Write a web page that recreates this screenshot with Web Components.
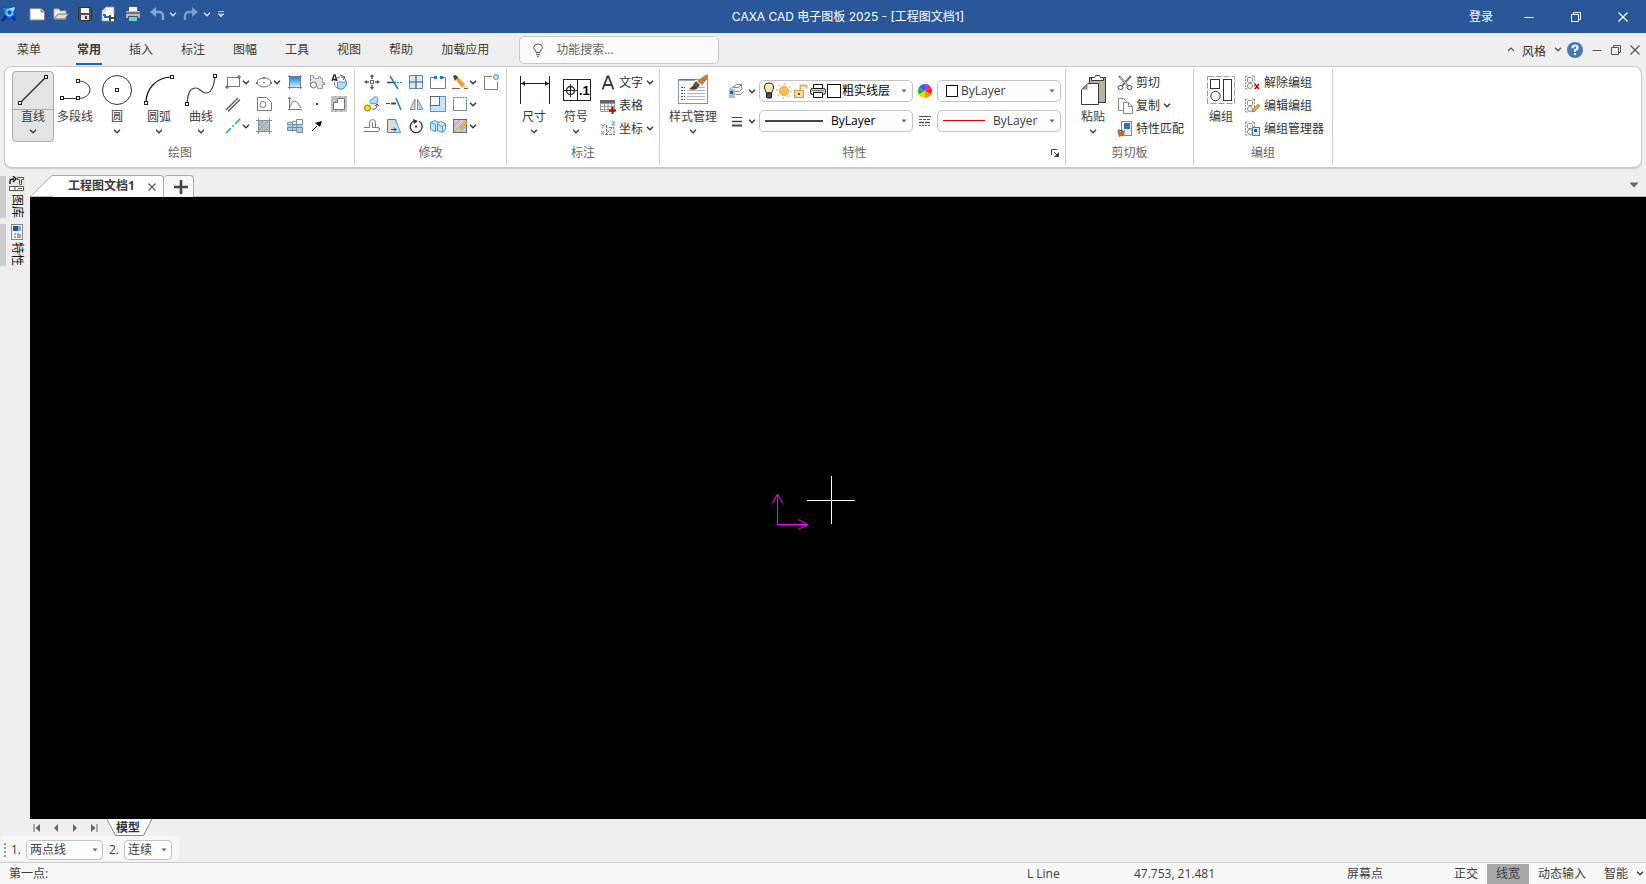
<!DOCTYPE html>
<html lang="zh-CN">
<head>
<meta charset="utf-8">
<title>CAXA CAD 电子图板 2025</title>
<style>
html,body{height:100%;margin:0}
body{font:12px/16px "Open Sans","Noto Sans CJK SC",sans-serif;color:#3c3c3c;background:#efefef;overflow:hidden}
</style>
</head>
<body>
<cad-app></cad-app>
<script>
const BASE = `*{box-sizing:border-box}
button{font:inherit;color:inherit;background:none;border:0;padding:0;margin:0;white-space:nowrap;cursor:default}
select,input{font:inherit;color:inherit;background:none;border:0;padding:0;margin:0;min-width:0;outline:0;appearance:none}`;

function define(name, css, html) {
  customElements.define(name, class extends HTMLElement {
    constructor() {
      super();
      const t = document.createElement('template');
      const body = typeof html === 'function' ? html(this) : html;
      t.innerHTML = `<style>${BASE}${css}</style>${body}`;
      this.attachShadow({ mode: 'open' }).append(t.content.cloneNode(true));
    }
  });
}

/* name: [width, height, markup] */
const sq = (x, y) => `<rect x="${x - 1.5}" y="${y - 1.5}" width="3" height="3" fill="#fff" stroke="#222"/>`;
const G = 'fill="none" stroke="#77797d"';
const B = 'stroke="#1e7fd0"';
const grp = `<g fill="#fff" stroke="#8a8c90"><path d="M.5 1v13M.5 1h3M.5 14h3M9.500 1v13M7 1h2.500" stroke-dasharray="2 1"/><rect x="2.500" y="2.500" width="5" height="5" rx="1"/><circle cx="5" cy="11" r="2.500"/></g>`;
const ICONS = {
  chev: [8, 5, '<path d="M1 .8l3 3 3-3" fill="none" stroke="currentColor" stroke-width="1.300"/>'],
  up: [8, 5, '<path d="M1 4l3-3 3 3" fill="none" stroke="currentColor" stroke-width="1.200"/>'],
  tri: [6, 4, '<path d="M.5 .5h5l-2.500 3z" fill="#666"/>'],
  tribig: [10, 6, '<path d="M.5 .5h9L5 5.500z" fill="#666"/>'],
  logo: [16, 16, '<path d="M1 1l6 1 8-1-1 5 1 5-3 1 3 3-5-2-8 3 1-6z" fill="#0b4fc4"/><path d="M2 2l5 0 7 0-2 3 1 4-5 3-4-3z" fill="#1687f0"/><circle cx="8.500" cy="6.500" r="3" fill="#0a55c8" stroke="#8fd0ff" stroke-width="1.500"/><path d="M1 15l4-5M12 11l2 3" stroke="#06246e" stroke-width="2"/><path d="M8 2.500l6-1.500-1 4" fill="#a8e2ff"/>'],
  new: [16, 16, '<path d="M1 2.500h11l3.500 3.500v8H1z" fill="#fff" stroke="#888"/><path d="M12 2.500V6h3.500" fill="#ccc" stroke="#777"/>'],
  open: [16, 16, '<path d="M1 3h5l1 2h6v8H1z" fill="#f4f0ea" stroke="#aaa"/><path d="M1 13l4-5h10.500l-4 5z" fill="#dedbd6" stroke="#777"/>'],
  save: [16, 16, '<rect x="1.500" y="1.500" width="13" height="13" rx="1" fill="#4c5054" stroke="#333"/><rect x="4" y="2" width="8" height="5" fill="#fff"/><rect x="4" y="9" width="8" height="5" fill="#ddd"/><rect x="8" y="10" width="2" height="3" fill="#345"/>'],
  saveas: [16, 16, '<path d="M5 1h8v14H1V5z" fill="#fff" stroke="#999"/><path d="M1 5h4V1z" fill="#ccc"/><path d="M2 9h2v2h4" stroke="#1674cb" stroke-width="2" fill="none"/><rect x="8" y="9" width="7" height="6" fill="#444"/><path d="M10 9h3v2h-3zM10 13h3v2h-3z" fill="#fff"/>'],
  print: [16, 16, '<rect x="4" y="1" width="8" height="6" fill="#fff"/><rect x="1" y="5" width="14" height="7" rx="1" fill="#b9bab9"/><path d="M1 7h14" stroke="#777" stroke-width="2"/><rect x="3" y="10" width="10" height="4" fill="#50565a"/><rect x="4" y="11" width="8" height="4" fill="#55d4ee"/>'],
  undo: [16, 16, '<path d="M7 1v10L1 6z" fill="#8aa6d0"/><path d="M6 6h4q4 0 4 4v4" fill="none" stroke="#8aa6d0" stroke-width="2.400"/>'],
  redo: [16, 16, '<path d="M9 1v10l6-5z" fill="#7d9cca"/><path d="M10 6H6q-4 0-4 4v4" fill="none" stroke="#7d9cca" stroke-width="2.400"/>'],
  more: [8, 8, '<path d="M1 1.500h6M1 4h6L4 7z" fill="#bbb" stroke="#c8c4bc"/>'],
  wmin: [10, 10, '<path d="M.5 5.500h9" stroke="currentColor"/>'],
  wres: [10, 10, '<path d="M.5 2.500h7v7h-7zM2.500 2.500V.5h7v7h-2" fill="none" stroke="currentColor"/>'],
  wclose: [10, 10, '<path d="M.5.5l9 9M9.500.5l-9 9" stroke="currentColor" stroke-width="1.200"/>'],
  help: [16, 16, '<circle cx="8" cy="8" r="8" fill="#437bb4"/><path d="M5.500 6.200Q5.500 3.500 8 3.500t2.500 2.300Q10.500 7.500 8 8.200v1.500" fill="none" stroke="#fff" stroke-width="2"/><rect x="7" y="11" width="2" height="2" fill="#fff"/>'],
  bulb: [12, 14, '<path d="M4 9.500Q4 8 3 7T1.500 4.500Q2 1 6 1t4.500 3.500Q10 6 9 7T8 9.500zM4 11.500h4M5 13.300h2" fill="none" stroke="#555"/>'],

  line: [42, 38, `<path d="M8 32L34 6" stroke="#333" stroke-width="1.500"/>${sq(8, 32)}${sq(34, 6)}`],
  pline: [42, 38, `<path d="M24 10C40 10 40 27.500 24 27.500H8" fill="none" stroke="#333"/>${sq(8, 27)}${sq(24, 27)}${sq(24, 10)}`],
  circle: [42, 38, `<circle cx="21" cy="19" r="14.500" fill="none" stroke="#333"/>${sq(21, 19)}`],
  arc: [42, 38, `<path d="M8 32C8 18 18 6 34 6" fill="none" stroke="#111" stroke-width="1.200"/>${sq(8, 32)}${sq(34, 6)}`],
  spline: [42, 38, `<path d="M7 33C8 20 11 17 16 17C20 17 21 22 26 22C32 22 34 15 35 5" fill="none" stroke="#444" stroke-width="1.200"/>${sq(7, 33)}${sq(35, 5)}`],
  dim: [42, 38, '<path d="M7.500 5v28M36.500 5v28M8 12.500h28" stroke="#222"/><path d="M8 12.500l4-2.500v5zM36 12.500l-4-2.500v5z" fill="#222"/>'],
  sym: [42, 38, '<rect x="8.500" y="8.500" width="27" height="21" fill="#fff" stroke="#222"/><path d="M22.500 8v22M9 19.500h13M15.500 13v13" stroke="#222"/><circle cx="15.500" cy="19.500" r="4" fill="none" stroke="#222" stroke-width="1.300"/><text x="24" y="24" font-family="Liberation Sans" font-weight="700" font-size="13" fill="#000">.1</text>'],
  style: [54, 38, '<rect x="12.500" y="8.500" width="29" height="24" fill="#fff" stroke="#8297ab"/><path d="M13 9h16" stroke="#39566f"/><path d="M15 16.500h4M15 19.500h4M15 22.500h4M15 25.500h4M15 28.500h4" stroke="#39566f" stroke-dasharray="2 1"/><path d="M21 19.500h18M21 22.500h18M21 25.500h18M21 28.500h18M33 16.500h6" stroke="#a9b3cb"/><path d="M31 10l7-5 4-2v4l-6 7z" fill="#c47a35"/><path d="M30 10l4 4-2 3-5-3z" fill="#555"/><path d="M23 18l5-4 4 3q-3 3-9 1z" fill="#6a3514"/>'],
  paste: [42, 38, '<rect x="17.500" y="6.500" width="16" height="25" fill="#beb09e" stroke="#333c48"/><path d="M19.500 9.500v-3h3l1-2h4l1 2h3v3z" fill="#fff" stroke="#333c48"/><path d="M15.500 12.500h11v21h-17v-15z" fill="#fff" stroke="#333c48"/><path d="M15.500 12.500v6h-6z" fill="#8c8c8c"/>'],
  group: [42, 38, '<rect x="7.500" y="5.500" width="27" height="27" fill="none" stroke="#999" stroke-dasharray="6 2"/><g fill="#fff" stroke="#333"><rect x="10.500" y="8.500" width="9" height="9"/><rect x="23.500" y="8.500" width="8" height="21"/><circle cx="15.500" cy="25" r="4.700"/></g>'],

  rect: [16, 16, `<rect x="2.500" y="3.500" width="12" height="9" ${G}/><path d="M1 12h2v2H1zM13 2h2v2h-2z" fill="#fff" stroke="#555"/>`],
  ellipse: [16, 16, `<ellipse cx="8" cy="8.500" rx="7" ry="4.500" ${G}/><path d="M7 3h2v2H7zM7 8h2v1H7zM0 8h2v2H0zM14 8h2v2h-2z" fill="#777"/>`],
  grad: [16, 16, '<defs><linearGradient id="g" x2="0" y2="1"><stop stop-color="#0c83e8"/><stop offset="1" stop-color="#d9eeff"/></linearGradient></defs><rect x="2.500" y="2.500" width="11" height="11" fill="url(#g)"/><path d="M2.500 1v14M13.500 1v14M1 2.500h14M1 13.500h14" stroke="#667" stroke-width=".8"/>'],
  gear: [16, 16, '<path d="M1.500 1.500h3v2l2 1h3v-2h2v2h2v4h2v2h-2v4h-5v-2" fill="#dfe3ea" stroke="#8f99a8"/><path d="M1.500 1v8M.5 6h3" fill="none" stroke="#8f99a8"/><circle cx="4.500" cy="11" r="3" fill="#fff" stroke="#666"/>'],
  rotA: [16, 16, '<circle cx="9.500" cy="9" r="6" fill="none" stroke="#555" stroke-dasharray="3 1"/><path d="M6.500 8h9q0 7-6 7-3 0-3-2z" fill="#b3dcf7" stroke="#4c9ad4"/><path d="M9 1l5 2-2 3" fill="none" stroke="#555"/><path d="M1 7l2-6h1l2 6M2 5.500h3" fill="none" stroke="#222" stroke-width="1.300"/>'],
  para: [16, 16, '<path d="M1 14L13 2M3 15.500L15 3.500" stroke="#555" stroke-width="1.300"/>'],
  poly: [16, 16, `<path d="M1.500 1.500h9l5 5v8h-14z" ${G}/><circle cx="7" cy="8.500" r="3" ${G}/>`],
  curve: [16, 16, `<path d="M2.500 1v13.500M1 13.500h14M2.500 12Q7-2 14 12M1 3l1.500-2L4 3" ${G}/>`],
  dot: [16, 16, '<rect x="7" y="7" width="2" height="2" fill="#444"/>'],
  region: [16, 16, '<rect width="16" height="16" fill="#c6c6c6"/><path d="M0 5l5-5M0 10L10 0M0 15L15 0M4 16L16 4M9 16l7-7" stroke="#a4a4a4"/><path d="M6.500 2.500h7v11h-11v-7h4z" fill="#fff" stroke="#777"/>'],
  cline: [16, 16, '<path d="M1 15L15 1" stroke="#1aa3e0" stroke-width="1.600" stroke-dasharray="7 2 2 2"/>'],
  hatch: [16, 16, '<rect x="3" y="3" width="10" height="10" fill="#b4bdc8"/><path d="M3 7l4-4M3 12l9-9M8 13l5-5" stroke="#98a1ab"/><path d="M2.500 0v16M13.500 0v16M0 2.500h16M0 13.500h16" stroke="#858d96"/>'],
  shaft: [16, 16, '<path d="M.5 4.500h5v-1h4v-2h6v5H.500z" fill="#fff" stroke="#778899"/><path d="M.5 9.500h15v5H10v-2H.500z" fill="#b3cde0" stroke="#778899"/><path d="M5.500 4v8M9.500 2v12M0 8h16" stroke="#6f96bb"/>'],
  arrow: [16, 16, '<path d="M3 13l5-5" stroke="#111"/><path d="M13 3L11 9 6 5z" fill="#000"/>'],

  move: [16, 16, '<path d="M8 2v3M8 11v3M2 8h3M11 8h3" stroke="#555" stroke-width="1.500"/><path d="M8 0l2 3H6zM8 16l2-3H6zM0 8l3-2v4zM16 8l-3-2v4z" fill="#555"/><rect x="6.500" y="6.500" width="3" height="3" fill="#fff" stroke="#666"/>'],
  trim: [16, 16, `<path d="M1 8.500h7" stroke="#444" stroke-width="1.500"/><path d="M8 8.500h8" stroke-dasharray="2 1" ${B}/><path d="M4 2l8 13" ${B} stroke-width="1.500"/>`],
  array: [16, 16, '<rect x="1.500" y="1.500" width="13" height="13" fill="#cfe9fb" stroke="#5b8db5"/><path d="M8 1v14M1 8h14" stroke="#557" stroke-width="1.200"/><path d="M9 9h5v5H9z" fill="#eee"/>'],
  brk: [16, 16, `<path d="M5 3.500H.500v11h15v-11H11" ${G}/><path d="M4 2h3v3H4zM10 2h3v3h-3z" fill="#1e7fd0"/>`],
  erase: [16, 16, '<path d="M1 2l3-1 9 9-3 4z" fill="#f0a030"/><path d="M1 2l2-1 3 2-3 4z" fill="#444"/><path d="M10 14l3-4 2 4z" fill="#f6d9b0"/><path d="M0 14.500h8M12 14.500h4" stroke="#855"/>'],
  newbox: [16, 16, `<path d="M9 2.500H1.500v13h13V8" ${G}/><circle cx="13" cy="3" r="2.500" fill="#bce0f8" stroke="#4c9ad4"/>`],
  copyrot: [16, 16, '<circle cx="3.500" cy="12" r="3" fill="#ffe600" stroke="#887700"/><path d="M6 7q-1-3 2-4t2-2q4-1 4 3 0 4-4 4z" fill="#b7def7" stroke="#4c9ad4"/><path d="M8 13q5 1 5-4M11 10l2-2 2 2" fill="none" stroke="#a33"/>'],
  extend: [16, 16, `<path d="M0 7.500h4" stroke="#444"/><path d="M5 7.500h5" stroke="#444" stroke-width="2"/><path d="M10 2l5 12" ${B} stroke-width="1.600"/>`],
  mirror: [16, 16, '<path d="M7 3v10.500H2z" fill="#ddd" stroke="#888"/><path d="M9.500 3v10.500H15z" fill="#b7d4e6" stroke="#7798ac"/>'],
  scale: [16, 16, '<rect x=".5" y=".5" width="15" height="15" fill="#c4e5fb" stroke="#4a9bd8"/><rect x=".5" y=".5" width="9" height="9" fill="#fff" stroke="#666"/>'],
  dash: [16, 16, '<rect x="1.500" y="1.500" width="13" height="13" fill="none" stroke="#1e7fd0" stroke-dasharray="2 1"/><path d="M14.500 8v6.500H1.500V8" fill="none" stroke="#888"/>'],
  offset: [16, 16, `<path d="M0 9.500h5.500V5q0-3.500 3-3.500t3 3.500v4.500h2q2 0 2 2t-2 2H0M8.500 4.500v5H15" ${G}/>`],
  stretch: [16, 16, '<path d="M1.500 1.500h8v13h-8z" fill="#ddd" stroke="#777"/><path d="M9.500 1.500l5 13h-6" fill="#c4e5fb" stroke="#4a9bd8"/><path d="M5 11.500h5M8 9.500l2 2-2 2" fill="none" stroke="#333"/>'],
  rotate: [16, 16, '<path d="M6 3a6 6 0 1 0 5 .300" fill="none" stroke="#333" stroke-width="1.300"/><path d="M5 1l5 2-4 3z" fill="#333"/><rect x="7" y="7.500" width="2" height="2" fill="#333"/>'],
  cubes: [16, 16, '<path d="M.5 4.500l4-2 5 2v7l-4 2-5-2zM.5 4.500l5 2v7" fill="#c4e5fb" stroke="#4a9bd8"/><path d="M7.500 5.500l3-2 5 2v6l-3 3-5-2zM7.500 6.500l5 2v6M12.500 8.500l3-3" fill="#cfe7f8" stroke="#4a9bd8"/>'],
  hatched: [16, 16, '<rect x="1.500" y="1.500" width="13" height="13" fill="#ccc" stroke="#666"/><path d="M2 8l6-6M2 14L14 2M8 14l6-6" stroke="#aaa"/><path d="M7 12l1-3 6-6 2 2-6 6z" fill="#e9a53a"/>'],

  text: [16, 16, '<path d="M2.500 14.500L7.500 1.500h1l5 13M4 10h8" fill="none" stroke="#333a45" stroke-width="1.800"/>'],
  table: [16, 16, '<path d="M.5 2.500h14v11H.500zM.5 8.500h14M.5 11.500h14M.5 5.500h14M4.500 3v10M8 3v10M11.500 3v10" fill="none" stroke="#999"/><path d="M0 2h15v3H0z" fill="#666"/><path d="M12.500 9v7M9 12.500h7" stroke="#c00000" stroke-width="2"/>'],
  coord: [16, 16, '<path d="M1 3l2 2 2-2M3 5v2M12 1h3l-3 3h3M1 10l3 4M4 10l-3 4" stroke="#4a9bd8" fill="none"/><path d="M6.500 4v9M5 13.500h10M7 12l6-6M9 6.500h5v6" stroke="#777" fill="none" stroke-dasharray="3 1"/>'],
  layers: [16, 16, '<path d="M5.500 4.500l3-3h5l-3 3zM6.500 8.500h5l3-3M7.500 11.500h5l3-3M13.500 1.500v4" fill="none" stroke="#888"/><path d="M8 2L2 6" stroke="#999"/><rect x="1" y="6" width="6" height="9" fill="#a8bfd4"/><rect x="2" y="8" width="3" height="3" fill="#1c63ad"/>'],
  lwidth: [16, 14, '<path d="M4 3.500h10" stroke="#444"/><path d="M4 7.500h10" stroke="#444" stroke-width="1.500"/><path d="M4 11.500h10" stroke="#444" stroke-width="2"/>'],
  light: [12, 18, '<path d="M3.500 11Q1.500 7 1.500 5q0-4 4.500-4t4.500 4q0 2-2 6z" fill="#ffedb0" stroke="#222"/><rect x="3.500" y="11" width="5" height="5" rx="1" fill="#555" stroke="#111"/>'],
  sun: [16, 16, '<circle cx="8" cy="8" r="7" fill="none" stroke="#f6c470" stroke-width="2" stroke-dasharray="1.500 4"/><circle cx="8" cy="8" r="4.500" fill="#ffbe55" stroke="#eea63b"/>'],
  lock: [16, 16, '<path d="M7.500 7V2.500h6v3" fill="none" stroke="#d9b45c" stroke-width="2"/><rect x="1.500" y="7.500" width="9" height="7" fill="#f6dc98" stroke="#c99f45"/><path d="M6 10v2" stroke="#333" stroke-width="1.500"/>'],
  plot: [16, 16, '<path d="M3.500 6.500v-5h9v5" fill="#fff" stroke="#111"/><rect x=".5" y="5.500" width="15" height="6" rx="2" fill="#d8dade" stroke="#111"/><path d="M3.500 9.500h9v5h-9z" fill="#fff" stroke="#111"/><path d="M2 7.500h12" stroke="#777"/>'],
  swatch: [14, 14, '<rect x=".5" y=".5" width="13" height="13" fill="#fff" stroke="#111"/>'],
  swatchs: [12, 12, '<rect x=".5" y=".5" width="11" height="11" fill="#fff" stroke="#111"/>'],
  wheel: [14, 14, '<path d="M7 7V0a7 7 0 0 1 6 3.500z" fill="#e23"/><path d="M7 7L13 3.500a7 7 0 0 1 0 7z" fill="#ff2020"/><path d="M7 7l6 3.500A7 7 0 0 1 7 14z" fill="#ff9100"/><path d="M7 7v7a7 7 0 0 1-6-3.500z" fill="#e9e000"/><path d="M7 7l-6 3.500a7 7 0 0 1 0-7z" fill="#19ba28"/><path d="M7 7L1 3.500A7 7 0 0 1 7 0z" fill="#3858f0"/><path d="M7 7V0q3 0 4.500 1.500z" fill="#c13ae0"/>'],
  ltype: [14, 14, '<path d="M1 2.500h12" stroke="#555"/><path d="M1 5.500h12" stroke="#555" stroke-dasharray="3 1"/><path d="M1 8.500h12" stroke="#555" stroke-width="1.500" stroke-dasharray="5 1"/><path d="M1 11.500h12" stroke="#555" stroke-dasharray="2 1"/>'],
  launch: [8, 8, '<path d="M.5 6V.5H6" fill="none" stroke="#444"/><path d="M3 3l3 3" stroke="#444"/><path d="M8 3v5H3z" fill="#444"/>'],
  cut: [16, 16, '<path d="M2 1l10 11M14 1L4 12" stroke="#777" stroke-width="2"/><path d="M3 2l9 10" stroke="#eee" stroke-width=".8"/><ellipse cx="3.500" cy="12.500" rx="2.500" ry="2" fill="#fff" stroke="#444"/><ellipse cx="12.500" cy="12.500" rx="2.500" ry="2" fill="#fff" stroke="#444"/>'],
  copy: [16, 16, '<path d="M1.500.500h5l3 3v9h-8z" fill="#fff" stroke="#888"/><path d="M6.500 4.500h5l4 4v7h-9z" fill="#fff" stroke="#888"/><path d="M11.500 4.500v4h4" fill="none" stroke="#888"/>'],
  match: [16, 16, '<rect x="4.500" y=".5" width="10" height="14" fill="#eee" stroke="#888"/><rect x="7" y="2" width="6" height="6" fill="#2f76b8"/><path d="M0 9l4 2 4-2-1 5-5 2z" fill="#b66a2a"/><path d="M1 9l5 1" stroke="#444"/>'],
  ungroup: [16, 16, grp + '<path d="M10 9l4 5M14 9l-4 5" stroke="#c00000" stroke-width="1.500"/>'],
  editgroup: [16, 16, grp + '<path d="M7 14l1-3 5-5 2 2-5 5z" fill="#e9a53a" stroke="#a66a20" stroke-width=".6"/>'],
  mangroup: [16, 16, grp + '<rect x="7.500" y="6.500" width="7" height="8" fill="#dde6ee" stroke="#678"/><rect x="9" y="8" width="3" height="3" fill="#1c63ad"/>'],

  x: [8, 8, '<path d="M.5.5l7 7M7.500.5l-7 7" stroke="#666" stroke-width="1.400"/>'],
  plus: [14, 14, '<path d="M7 0v14M0 7h14" stroke="#444" stroke-width="2.600"/>'],
  lib: [16, 16, '<rect width="16" height="16" fill="#e9e9d8"/><path d="M1 8V5q0-2 4-2M4 0l3 3-3 3" fill="none" stroke="#111" stroke-width="1.400"/><path d="M8.500 1.500h6v2h-2v5h-2v-5h-2zM.5 10.500h14v4H.500zM6 11v3M9 12.500h4" fill="#fff" stroke="#555"/>'],
  prop: [16, 16, '<rect x="2.500" y=".5" width="11" height="15" fill="#f4f4f4" stroke="#888"/><rect x="4" y="2" width="5" height="5" fill="#1757a4"/><rect x="9" y="2" width="3" height="5" fill="#8ab"/><path d="M5 10h2M5 13h2M9 9v5M11 10v4" stroke="#556"/>'],
  first: [8, 8, '<path d="M1 0v8" stroke="#666"/><path d="M7 0v8L2.500 4z" fill="#666"/>'],
  prev: [8, 8, '<path d="M6 0v8L2 4z" fill="#666"/>'],
  next: [8, 8, '<path d="M2 0v8l4-4z" fill="#666"/>'],
  last: [8, 8, '<path d="M7 0v8" stroke="#666"/><path d="M1 0v8l4.500-4z" fill="#666"/>'],
  grip: [4, 16, '<path d="M2 1v14" stroke="#999" stroke-width="2" stroke-dasharray="2 2"/>'],
};

customElements.define('cad-icon', class extends HTMLElement {
  connectedCallback() {
    if (this.shadowRoot) return;
    const [w, h, body] = ICONS[this.getAttribute('name')];
    this.attachShadow({ mode: 'open' }).innerHTML =
      `<style>:host{display:block;flex:none}svg{display:block}</style><svg width="${w}" height="${h}" viewBox="0 0 ${w} ${h}" aria-hidden="true">${body}</svg>`;
  }
});
const icon = n => `<cad-icon name="${n}"></cad-icon>`;
const at = (el, n) => el.getAttribute(n) || '';

/* Title bar */
define('title-bar', `:host{display:flex;height:33px;background:#2a579a;color:#fff;align-items:center}
.quick{display:flex;align-self:flex-start;align-items:center;width:235px;height:28px;padding-left:1px}
.quick button{display:flex;flex:none}
.quick .app{margin-right:12px}.quick .file{width:24px}.quick .act{width:20px}.quick .drop{width:14px;opacity:.85}
h1{flex:1;margin:0;font:12px/32px Inter,"Noto Sans CJK SC",sans-serif;text-align:center;white-space:nowrap}
.login{padding:0 12px 0 8px;height:32px}
.win{width:47px;height:33px;display:flex;align-items:center;justify-content:center}`,
`<div class="quick"><button class="app">${icon('logo')}</button>
${['new', 'open', 'save', 'saveas', 'print'].map(n => `<button class="file">${icon(n)}</button>`).join('')}
<button class="act">${icon('undo')}</button><button class="drop">${icon('chev')}</button><button class="act">${icon('redo')}</button>
<button class="drop">${icon('chev')}</button><button>${icon('more')}</button></div>
<h1>CAXA CAD 电子图板 2025 - [工程图文档1]</h1>
<button class="login">登录</button>
${['wmin', 'wres', 'wclose'].map(n => `<button class="win">${icon(n)}</button>`).join('')}`);

/* Menu tabs and search */
define('menu-bar', `:host{display:flex;height:33px;align-items:center;padding:0 6px 0 3px}
nav{display:flex}
nav button{padding:0 14px;height:32px;position:relative}
nav button:first-child{margin-right:8px}
nav .on{font-weight:700}
nav .on::after{content:"";position:absolute;left:13px;right:13px;bottom:1px;height:2px;background:#1464c8}
.search{display:flex;align-items:center;margin-left:16px;width:200px;height:28px;border:1px solid #c9c9c9;border-radius:5px;background:#fbfbfb;padding-left:12px;gap:12px}
.search input{flex:1}.search input::placeholder{color:#666;opacity:1}
.right{margin-left:auto;display:flex;align-items:center;color:#555;height:30px}
.right button{display:flex;align-items:center}
.style{color:#333;padding:4px 8px 0 7px}
.help{margin:0 9px 0 5px}.doc{margin-left:9px}`,
`<nav>${['菜单', '常用', '插入', '标注', '图幅', '工具', '视图', '帮助', '加载应用'].map(t => `<button${t === '常用' ? ' class="on"' : ''}>${t}</button>`).join('')}</nav>
<label class="search">${icon('bulb')}<input type="text" placeholder="功能搜索..."></label>
<div class="right"><button>${icon('up')}</button><button class="style">风格</button><button>${icon('chev')}</button>
<button class="help">${icon('help')}</button><button>${icon('wmin')}</button><button class="doc">${icon('wres')}</button><button class="doc">${icon('wclose')}</button></div>`);

/* Ribbon pieces */
define('ribbon-group', `:host{display:flex;flex-direction:column;border-right:1px solid #ccc;height:96px;padding:2px 0 0 6px;margin-top:2px}
.items{display:flex;height:72px}
footer{display:flex;align-items:center;height:20px;margin-left:-6px;color:#666;padding-right:6px}
footer span{flex:1;text-align:center;padding-left:6px}
footer button{padding-left:8px}`,
  el => `<div class="items"><slot></slot></div><footer><span>${at(el, 'label')}</span>${el.hasAttribute('launcher') ? `<button>${icon('launch')}</button>` : ''}</footer>`);

define('big-button', `:host{display:block}
button{display:flex;flex-direction:column;align-items:center;min-width:42px;height:71px;border:1px solid transparent;border-radius:4px}
cad-icon{margin:-1px -1px 0}
:host([on]) button{background:#e4e4e4;border-color:#aaa}
:host([on]) span{border-top:1px solid #aaa;align-self:stretch}
span{border-top:1px solid transparent;height:20px;line-height:14px;margin-bottom:1px}`,
  el => `<button>${icon(at(el, 'icon'))}<span>${at(el, 'label')}</span>${el.hasAttribute('drop') ? icon('chev') : ''}</button>`);

define('tool-button', `:host{display:block}
button{display:flex;align-items:center;height:100%;color:#333;padding-left:1px}
span{margin:0 3px}
cad-icon + cad-icon{margin-left:var(--gap,1px)}`,
  el => `<button>${icon(at(el, 'icon'))}${at(el, 'label') && `<span>${at(el, 'label')}</span>`}${el.hasAttribute('drop') ? icon('chev') : ''}</button>`);

/* Rows of small tools; pass the column tracks through --cols */
define('tool-grid', `:host{display:grid;grid-template-columns:var(--cols);grid-auto-rows:var(--row,22px);align-content:start}`, `<slot></slot>`);

define('combo-box', `:host{display:flex;align-items:center;height:22px;border:1px solid #c3c3c3;border-radius:5px;background:#fdfdfd;position:relative;padding:0 5px}
select{flex:1;align-self:stretch;padding-left:var(--indent,0px)}
.tri{position:absolute;right:5px;pointer-events:none}
::slotted(*){flex:none}`,
  el => `<slot></slot><select aria-label="${at(el, 'name')}"><option>${at(el, 'value')}</option></select><cad-icon class="tri" name="tri"></cad-icon>`);

const tool = (n, d) => n ? `<tool-button icon="${n}"${d ? ' drop' : ''}></tool-button>` : '<i></i>';
define('ribbon-panel', `:host{display:flex;margin:0 4px;padding-left:1px;height:102px;border:1px solid #c9c9c9;border-radius:8px;background:#fff;box-shadow:0 1px 1px #ccc}
.draw{--cols:31px 31px 22px 22px 22px;padding:0 2px}
.modify{--cols:22px 22px 22px 22px 31px 22px;padding:0 2px}
.rows{--cols:auto;--row:23px;padding-left:2px}
.note{padding-right:5px}
.clip{padding-right:6px}.grp{padding-right:5px}
.props{display:grid;grid-template-columns:32px 154px 24px 124px;grid-auto-rows:30px;align-items:center;padding:5px 4px 0 7px;align-content:start}
.props tool-button{height:22px;--gap:4px}
.layer{color:#000;padding-left:3px}.layer cad-icon{margin-right:1px}
.wide{--indent:8px;color:#000}.color{--indent:3px;padding-left:8px}.type{--indent:8px}
.wheel{justify-self:center}
.bar{height:2px;background:#444;width:58px}.red{height:1px;background:#e00000;width:42px;margin-bottom:1px}`,
`<ribbon-group label="绘图"><big-button on drop icon="line" label="直线"></big-button><big-button icon="pline" label="多段线"></big-button><big-button drop icon="circle" label="圆"></big-button><big-button drop icon="arc" label="圆弧"></big-button><big-button drop icon="spline" label="曲线"></big-button>
<tool-grid class="draw">${tool('rect', 1)}${tool('ellipse', 1)}${tool('grad')}${tool('gear')}${tool('rotA')}${tool('para')}${tool('poly')}${tool('curve')}${tool('dot')}${tool('region')}${tool('cline', 1)}${tool('hatch')}${tool('shaft')}${tool('arrow')}</tool-grid></ribbon-group>
<ribbon-group label="修改"><tool-grid class="modify">${tool('move')}${tool('trim')}${tool('array')}${tool('brk')}${tool('erase', 1)}${tool('newbox')}${tool('copyrot')}${tool('extend')}${tool('mirror')}${tool('scale')}${tool('dash', 1)}${tool()}${tool('offset')}${tool('stretch')}${tool('rotate')}${tool('cubes')}${tool('hatched', 1)}</tool-grid></ribbon-group>
<ribbon-group label="标注"><big-button drop icon="dim" label="尺寸"></big-button><big-button drop icon="sym" label="符号"></big-button>
<tool-grid class="rows note"><tool-button drop icon="text" label="文字"></tool-button><tool-button icon="table" label="表格"></tool-button><tool-button drop icon="coord" label="坐标"></tool-button></tool-grid></ribbon-group>
<ribbon-group label="特性" launcher><big-button drop icon="style" label="样式管理"></big-button>
<div class="props"><tool-button drop icon="layers"></tool-button>
<combo-box class="layer" name="图层" value="粗实线层">${icon('light')}${icon('sun')}${icon('lock')}${icon('plot')}${icon('swatch')}</combo-box>
<cad-icon class="wheel" name="wheel"></cad-icon>
<combo-box class="color" name="颜色" value="ByLayer"><cad-icon name="swatchs"></cad-icon></combo-box>
<tool-button drop icon="lwidth"></tool-button>
<combo-box class="wide" name="线宽" value="ByLayer"><div class="bar"></div></combo-box>
<cad-icon class="wheel" name="ltype"></cad-icon>
<combo-box class="type" name="线型" value="ByLayer"><div class="red"></div></combo-box></div></ribbon-group>
<ribbon-group label="剪切板"><big-button drop icon="paste" label="粘贴"></big-button>
<tool-grid class="rows clip"><tool-button icon="cut" label="剪切"></tool-button><tool-button drop icon="copy" label="复制"></tool-button><tool-button icon="match" label="特性匹配"></tool-button></tool-grid></ribbon-group>
<ribbon-group label="编组"><big-button icon="group" label="编组"></big-button>
<tool-grid class="rows grp"><tool-button icon="ungroup" label="解除编组"></tool-button><tool-button icon="editgroup" label="编辑编组"></tool-button><tool-button icon="mangroup" label="编组管理器"></tool-button></tool-grid></ribbon-group>`);

/* Docked panels on the left edge */
define('side-dock', `:host{display:flex;flex-direction:column;gap:6px;width:30px;padding-top:8px}
button{display:flex;flex-direction:column;align-items:center;gap:2px;height:42px;border-left:6px solid #ccc;padding-right:3px}
span{writing-mode:vertical-rl;text-orientation:sideways;line-height:16px;color:#111}`,
`<button>${icon('lib')}<span>图库</span></button><button>${icon('prop')}<span>特性</span></button>`);

define('document-tabs', `:host{display:flex;align-items:flex-end;height:29px;border-bottom:1px solid #bbb}
svg{display:block;flex:none}
button{display:flex}
.tab{display:flex;align-items:center;height:22px;width:111px;background:#fff;border:1px solid #aaa;border-width:1px 1px 0 0;border-radius:0 4px 0 0;font-weight:700;padding:0 7px 2px 15px;justify-content:space-between;margin-bottom:-1px}
.tab button{padding-top:2px}
.add{height:22px;width:30px;border:1px solid #aaa;border-width:1px 1px 0 0;border-radius:4px 4px 0 0;align-items:center;justify-content:center;background:#f8f8f8;margin-bottom:-1px;padding-left:4px}
.list{margin:0 7px 8px auto}`,
`<svg width="23" height="21" viewBox="0 0 23 21"><path d="M1 21L22 .5h1V21z" fill="#fff"/><path d="M1 21L22 .5h1" fill="none" stroke="#aaa"/></svg>
<div class="tab">工程图文档1<button>${icon('x')}</button></div><button class="add">${icon('plus')}</button><button class="list">${icon('tribig')}</button>`);

define('drawing-area', `:host{display:block;flex:1;background:#000;position:relative;overflow:hidden}
svg{position:absolute;left:calc(50% - 70px);top:calc(50% - 36px)}`,
`<svg width="96" height="64" viewBox="0 0 96 64" fill="none"><path d="M9.500 23v29.500H40M4.500 31l5-9 5 9M30 47.500l10 5-10 5" stroke="#f0f"/><path d="M63.500 4v22M63.500 30v22M39 28.500h22M66 28.500h21M61 28.500h5M63.500 26v5" stroke="#fff"/></svg>`);

define('sheet-tabs', `:host{display:flex;align-items:center;height:17px;padding-left:3px}
button{width:19px;height:16px;display:flex;align-items:center}
.model{position:relative;width:45px;height:17px;padding:0 0 0 9px;font-weight:700;color:#333;margin-left:-2px}
svg{position:absolute;left:0;top:0}.model span{position:relative}`,
`${['first', 'prev', 'next', 'last'].map(n => `<button>${icon(n)}</button>`).join('')}
<button class="model"><svg width="45" height="17" viewBox="0 0 45 17"><path d="M0 0l8.500 16.500h28L45 0" fill="#fff" stroke="#888"/></svg><span>模型</span></button>`);

define('prompt-bar', `:host{display:flex}
form{display:flex;align-items:center;width:179px;height:25px;background:#f8f8f8;border-radius:4px;padding:2px 0 0 3px}
label{margin-left:4px;width:15px}
.sel{display:flex;align-items:center;position:relative;height:20px;border:1px solid #c3c3c3;border-radius:4px;background:#fdfdfd}
select{width:100%;height:100%;padding-left:3px}
.sel cad-icon{position:absolute;right:4px;pointer-events:none}
.a{width:77px;margin-right:2px}.b{width:48px}`,
`<form>${icon('grip')}<label for="a">1.</label><div class="sel a"><select id="a"><option>两点线</option></select>${icon('tri')}</div>
<label for="b">2.</label><div class="sel b"><select id="b"><option>连续</option></select>${icon('tri')}</div></form>`);

define('status-bar', `:host{display:flex;height:22px;margin-top:1px;border-top:1px solid #ccc;background:#f8f8f8;align-items:center}
.msg{flex:1;padding-left:9px}.cmd{width:107px}.pos{width:213px}.snap{width:98px}
button{height:20px;padding:0 9px;display:flex;align-items:center}.on{background:#a8a8a8}
.smart{padding:0 2px 0 9px;gap:8px}`,
`<span class="msg">第一点:</span><span class="cmd">L Line</span><span class="pos">47.753, 21.481</span><span class="snap">屏幕点</span>
<button>正交</button><button class="on">线宽</button><button>动态输入</button><button class="smart">智能${icon('chev')}</button>`);

define('cad-app', `:host{display:flex;flex-direction:column;height:100vh}
.work{flex:1;display:flex;min-height:0}.center{flex:1;display:flex;flex-direction:column;min-width:0}`,
`<title-bar></title-bar><menu-bar></menu-bar><ribbon-panel></ribbon-panel>
<div class="work"><side-dock></side-dock><div class="center"><document-tabs></document-tabs><drawing-area></drawing-area><sheet-tabs></sheet-tabs></div></div>
<prompt-bar></prompt-bar><status-bar></status-bar>`);
</script>
</body>
</html>
